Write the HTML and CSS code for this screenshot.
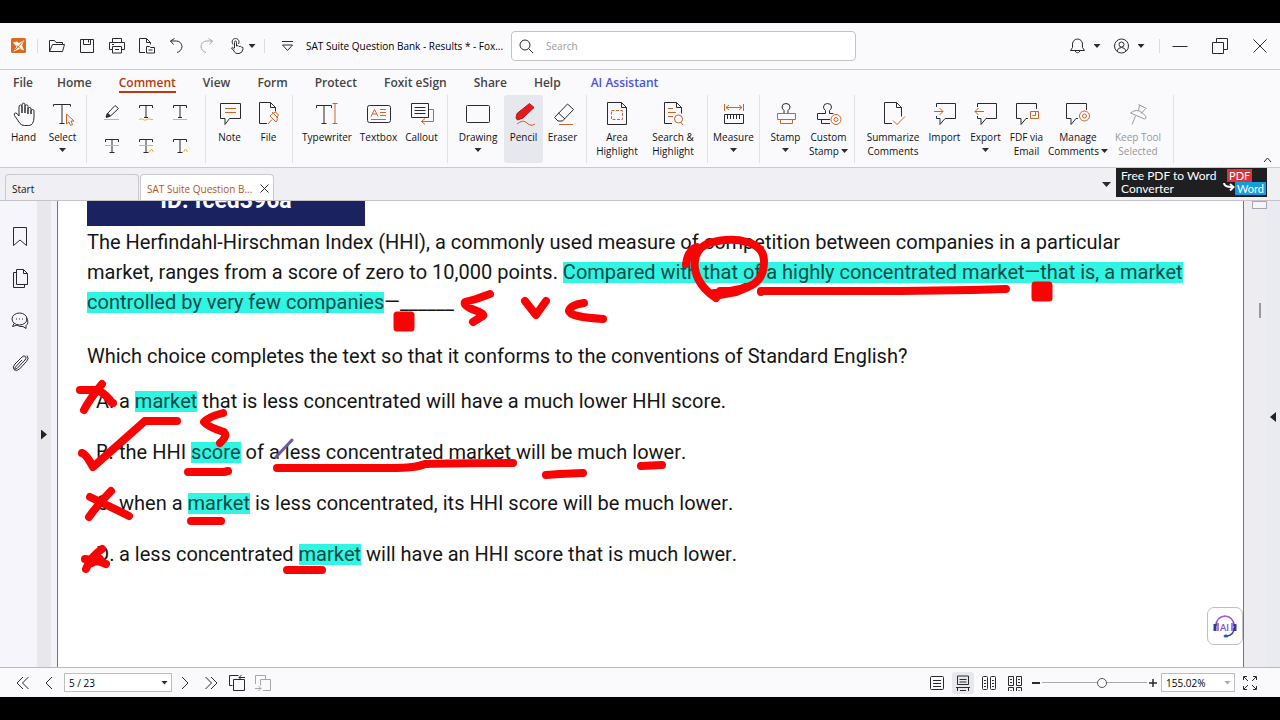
FILE: index.html
```html
<!DOCTYPE html>
<html lang="en">
<head>
<meta charset="utf-8">
<title>SAT Suite Question Bank - Results</title>
<link rel="stylesheet" href="styles.css">
</head>
<body>
<div class="app">
<header class="titlebar">
  <svg class="logo" width="16" height="16" viewBox="0 0 16 16"><rect x="0" y="0" width="15" height="15" rx="1.500" fill="#dc6a1e" stroke="none"/><path d="M2 4.500l4-1 2 1.500 5.500-3-2.500 5 2 5.500-4-1.500-6.500 2.500 3-5z" fill="#fff" stroke="none"/><path d="M4 12L12 3.500M5.500 7.500l4 3" stroke="#dc6a1e"/></svg>
  <span class="sep"></span>
  <button class="tb" aria-label="Open"><svg width="16" height="16" viewBox="0 0 16 16"><path d="M.5 13.500V2.500h5l1.500 2h6.500v2M.5 13.500l3-7h12l-2 7z"/></svg></button>
  <button class="tb" aria-label="Save"><svg width="16" height="16" viewBox="0 0 16 16"><path d="M1.500 1.500h13v13h-13zM4.500 1.500v5h7v-5M9.500 2v2.500"/></svg></button>
  <button class="tb" aria-label="Print"><svg width="16" height="16" viewBox="0 0 16 16"><path d="M3.500 4.500v-4h9v4M3.500 11.500h-3v-7h15v7h-3M3.500 8.500h9v6.500h-9zM3 6.500h2M6 11.500h4"/></svg></button>
  <button class="tb" aria-label="Export page"><svg width="16" height="16" viewBox="0 0 16 16"><path d="M6 14.500H.5V.5h7l4 4v2M7.500.5v4h4M7.500 8.500h3l1 1h4v5.500h-8zM9.500 12h4"/></svg></button>
  <button class="tb" aria-label="Undo"><svg width="16" height="16" viewBox="0 0 16 16"><path d="M5.500.5L1.500 3l3 3.500M1.500 3h6c3 0 5.500 2.500 5.500 5.500S10.500 14 8 14.500"/></svg></button>
  <button class="tb off" aria-label="Redo"><svg width="16" height="16" viewBox="0 0 16 16"><path d="M9.500.5l4 2.500-3 3.500M13.500 3h-6C4.500 3 2 5.500 2 8.500S4.500 14 7 14.500"/></svg></button>
  <button class="tb pair" aria-label="Touch mode"><svg width="16" height="16" viewBox="0 0 16 16"><path d="M5.500 10V4.500q0-1.500 1-1.500t1 1.500V8q2-1 2.500.5 2-.8 2.500.7 2-.2 1.500 1.800-.5 4-4 4.500c-3 .4-4-.5-5-2.500L2.500 10q.5-2 3 1M4 6.500C2 3 4 .5 6.500.5S11 3 9.500 6"/></svg><i class="caret"></i></button>
  <span class="sep"></span>
  <button class="tb more" aria-label="Customize toolbar"><svg width="14" height="16" viewBox="0 0 14 16"><path d="M1 3.500h11M1.500 7l5 5.500 5-5.500z"/></svg></button>
  <h1 class="doc-title">SAT Suite Question Bank - Results * - Fox...</h1>
  <label class="search"><svg width="16" height="16" viewBox="0 0 16 16"><circle cx="7" cy="7" r="5"/><path d="M10.500 10.500l4.500 4.500"/></svg><input type="search" placeholder="Search" aria-label="Search"></label>
  <div class="window">
    <button class="tb acct" aria-label="Notifications"><svg width="16" height="16" viewBox="0 0 16 16"><path d="M.5 12.500h14l-2-3V6C12.500 3 10 1 7.500 1S2.500 3 2.500 6v3.500zM5 13q2.500 3.500 5 0"/></svg><i class="caret"></i></button>
    <button class="tb acct" aria-label="Account"><svg width="16" height="16" viewBox="0 0 16 16"><circle cx="7.500" cy="8" r="7"/><circle cx="7.500" cy="6.500" r="2.500"/><path d="M3 13q1-3.500 4.500-3.500T12 13"/></svg><i class="caret"></i></button>
    <span class="sep"></span>
    <button class="tb win" aria-label="Minimize"><svg width="16" height="16" viewBox="0 0 16 16"><path d="M.5 8.500h15"/></svg></button>
    <button class="tb win" aria-label="Restore"><svg width="16" height="16" viewBox="0 0 16 16"><path d="M.5 4.500h11v11h-11zM4.500 4V.5h11v11h-3.500"/></svg></button>
    <button class="tb win" aria-label="Close"><svg width="16" height="16" viewBox="0 0 16 16"><path d="M1.500 1.500l13 13M14.500 1.500l-13 13"/></svg></button>
  </div>
</header>
<nav class="menu">
  <a href="#">File</a><a href="#">Home</a><a href="#" class="current">Comment</a><a href="#">View</a><a href="#">Form</a><a href="#">Protect</a><a href="#">Foxit eSign</a><a href="#">Share</a><a href="#">Help</a><a href="#" class="ai">AI Assistant</a>
</nav>
<div class="ribbon">
  <div class="group">
    <button class="tool s"><svg viewBox="0 0 26 26"><path d="M9 22.500L3.500 14.500q-1-2 .8-2.500t3.700 3V6q0-2 1.500-2T11 6v6V4q0-1.800 1.500-1.800T14 4v8-6.500q0-1.700 1.500-1.700T17 5.500V13 8q0-1.500 1.500-1.500T20 8v5-3q0-1.500 1.500-1.500T23 10v6q0 4-1.500 6.500-1 2-4 2h-4q-3 0-4.500-2z"/></svg><span>Hand</span></button>
    <button class="tool s"><svg viewBox="0 0 26 26"><path d="M3.500 5.500v-2h17v2M12 4v18.500M9.500 22.500h5"/><path class="o" d="M16.500 13v10l2.500-2 1.500 3.500 2-1-1.500-3.500h3z"/></svg><span>Select</span><i class="caret"></i></button>
  </div>
  <div class="group marks">
    <button aria-label="Highlight"><svg width="18" height="18" viewBox="0 0 18 18"><path d="M4.500 9.500L12 1.500l3.500 3-8 7.500M4.500 9l3 3-4 1.500z"/><path d="M3 13l1.500-3.500L7 12z" fill="#333"/><path class="y" d="M1 15.500h15"/></svg></button>
    <button aria-label="Squiggly underline"><svg width="18" height="18" viewBox="0 0 18 18"><path d="M2.500 4V1.500h13V4M9 2v11M7 13.500h4"/><path class="y" d="M2 15.500q2-1.500 4 0t4 0 4 0h2"/></svg></button>
    <button aria-label="Underline"><svg width="18" height="18" viewBox="0 0 18 18"><path d="M2.500 4V1.500h13V4M9 2v11M7 13.500h4"/><path class="y" d="M2 15.500h14"/></svg></button>
    <button aria-label="Strikeout"><svg width="18" height="18" viewBox="0 0 18 18"><path d="M2.500 5V2.500h13V5M9 3v12M6.500 15.500h5"/><path class="y" d="M2 8.500h14"/></svg></button>
    <button aria-label="Replace text"><svg width="18" height="18" viewBox="0 0 18 18"><path d="M2.500 5V2.500h13V5M9 3v12M6.500 15.500h5"/><path class="y" d="M2 8.500h14M12.500 15l2-3 2 3"/></svg></button>
    <button aria-label="Insert text"><svg width="18" height="18" viewBox="0 0 18 18"><path d="M2.500 5V2.500h13V5M9 3v12M6.500 15.500h5"/><path class="y" d="M12.500 15l2-3 2 3"/></svg></button>
  </div>
  <div class="group">
    <button class="tool s"><svg viewBox="0 0 26 26"><path d="M3.500 2.500h20v15h-11l-4.500 6v-6H3.500z"/><path class="o" d="M8 7.500h11M8 11.500h11"/></svg><span>Note</span></button>
    <button class="tool s"><svg viewBox="0 0 26 26"><path d="M11 22.500H3.500v-21h11l5 5v4M14.500 1.500v5h5"/><path class="o" d="M16 11l6 6M17 12.500l2.500-1.500 3 3-1.500 2.500q1 3-1 4.500l-6-6q2-2 3-2.500zM16 18.500l-4 4.500"/></svg><span>File</span></button>
  </div>
  <div class="group">
    <button class="tool xl"><svg viewBox="0 0 26 26"><path d="M2.500 7V4.500h15V7M10 5v17M7.500 22.500h5"/><path class="o" d="M18.500 2.500h5M18.500 22.500h5M21 3v19"/></svg><span>Typewriter</span></button>
    <button class="tool m"><svg viewBox="0 0 26 26"><rect x="1.500" y="4.500" width="23" height="17" rx="2"/><path class="o" d="M5 15.500l3.500-7 3.500 7M6.500 13h4M14 8.500h6M14 11.500h6M14 14.500h6M5 18.500h15"/></svg><span>Textbox</span></button>
    <button class="tool m"><svg viewBox="0 0 26 26"><path d="M2.500 2.500h17v14h-17zM5.500 6.500h11M5.500 9.500h11M5.500 12.500h11"/><path class="o" d="M20 8.500h4.500v12H13M16 17.500l-3.500 3 3.500 3"/></svg><span>Callout</span></button>
  </div>
  <div class="group">
    <button class="tool l"><svg viewBox="0 0 26 26"><rect x="1.500" y="4.500" width="23" height="17" rx="1"/></svg><span>Drawing</span><i class="caret"></i></button>
    <button class="tool s on" aria-pressed="true"><svg viewBox="0 0 26 26"><path class="lead" d="M5 17l1-4.500L18.500 2.500l4.500 4L12 17l-5.500 2z"/><path class="o" d="M6 23q6-5 10-1t8 1"/></svg><span>Pencil</span></button>
    <button class="tool s"><svg viewBox="0 0 26 26"><path d="M4.500 16.500L17.500 3l6 5.500-11 11.500H8zM8.500 12l6.500 6"/><path class="o" d="M9 23.500h14"/></svg><span>Eraser</span></button>
  </div>
  <div class="group">
    <button class="tool l"><svg viewBox="0 0 26 26"><path d="M3.500 1.500h14l5 5v17h-19zM17.500 1.500v5h5"/><path class="o" stroke-dasharray="3 1.500" d="M7.500 9.500h11v9h-11z"/></svg><span>Area<br>Highlight</span></button>
    <button class="tool xl"><svg viewBox="0 0 26 26"><path d="M12 22.500H4.500v-21h12l5 5v6M16.500 1.500v5h5"/><path class="o" d="M8 7.500h5M8 11.500h8M8 15.500h5M20.500 21l2.500 3"/><circle class="o" cx="18.500" cy="18" r="4"/></svg><span>Search &amp;<br>Highlight</span></button>
  </div>
  <div class="group">
    <button class="tool m"><svg viewBox="0 0 26 26"><path class="o" d="M3.500 3v7M22.500 3v7M5 6.500h16M8 4L5 6.500 8 9M18 4l3 2.500L18 9"/><path d="M3.500 13.500h19v9h-19zM6.500 14v4M9.500 14v4M12.500 14v4M15.500 14v4M18.500 14v4"/></svg><span>Measure</span><i class="caret"></i></button>
  </div>
  <div class="group">
    <button class="tool m"><svg viewBox="0 0 26 26"><path d="M11 12V9.500q-2-1.500-2-3.500 0-3.500 4-3.500T17 6q0 2-2 3.500V12"/><path class="o" d="M4.500 12.500h18v6h-18zM7.500 19v3.500h12V19"/></svg><span>Stamp</span><i class="caret"></i></button>
    <button class="tool m"><svg viewBox="0 0 26 26"><path d="M14 18.500H1.500v-6h8V9.500q-2-1.500-2-3.500 0-3.500 4-3.500T15.500 6q0 2-2 3.500v3h4M5.500 19v3.500H14"/><circle class="o" cx="20" cy="18.500" r="5"/><circle class="o" cx="20" cy="18.500" r="2"/></svg><span>Custom<br>Stamp<i class="caret"></i></span></button>
  </div>
  <div class="group last">
    <button class="tool xl"><svg viewBox="0 0 26 26"><path d="M12 22.500H4.500v-21h12l5 5v9M16.500 1.500v5h5"/><path class="o" d="M13 19.500l4 4 8-8"/></svg><span>Summarize<br>Comments</span></button>
    <button class="tool m"><svg viewBox="0 0 26 26"><path d="M4.500 6V2.500h19v15H13l-5 6v-6H4.500V15"/><path class="o" d="M2 10.500h9M7.500 7l3.500 3.500L7.500 14"/></svg><span>Import</span></button>
    <button class="tool s"><svg viewBox="0 0 26 26"><path d="M4.500 6V2.500h19v15H13l-5 6v-6H4.500V15"/><path class="o" d="M2 10.500h9M5.500 7L2 10.500 5.500 14"/></svg><span>Export</span><i class="caret"></i></button>
    <button class="tool m"><svg viewBox="0 0 26 26"><path d="M22.500 8V2.500h-20v15H7v6l5-6h2"/><path class="o" d="M16.500 10.500h8v7h-8zM21.500 11v3.500h-3"/></svg><span>FDF via<br>Email</span></button>
    <button class="tool xl"><svg viewBox="0 0 26 26"><path d="M21.500 9V2.500h-20v15H6v6l5-6h2"/><circle class="o" cx="19.500" cy="15" r="5"/><circle class="o" cx="19.500" cy="15" r="2"/></svg><span>Manage<br>Comments<i class="caret"></i></span></button>
    <button class="tool xl" disabled><svg viewBox="0 0 26 26"><path d="M13.500 3.500l8 4M14.500 4l-1 6M20.500 7.500l-4 5M5.500 12q6-5 12 0t2 6zM10.500 15L7 23.500"/></svg><span>Keep Tool<br>Selected</span></button>
  </div>
  <button class="collapse" aria-label="Collapse ribbon"><svg width="9" height="6" viewBox="0 0 9 6"><path d="M1 5l3.500-4L8 5"/></svg></button>
</div>
<div class="tabs">
  <button class="tab">Start</button>
  <div class="tab active"><span>SAT Suite Question B...</span><button aria-label="Close tab"><svg width="9" height="9" viewBox="0 0 9 9"><path d="M.5.5l8 8M8.500.5l-8 8"/></svg></button></div>
  <button class="tablist" aria-label="Tab list"><i class="caret"></i></button>
  <a class="promo" href="#"><span>Free PDF to Word<br>Converter</span><span class="chips"><b class="pdf">PDF</b><span class="to"><svg width="12" height="10" viewBox="0 0 12 10"><path d="M1 1q0 4 8 4M7 2l3.500 3L7 8.500"/></svg><b class="word">Word</b></span></span></a>
</div>
<main class="work">
  <aside class="rail">
    <button aria-label="Bookmarks"><svg width="18" height="20" viewBox="0 0 18 20"><path d="M2.500.5h13v18L9 13l-6.500 5.500z"/></svg></button>
    <button aria-label="Pages"><svg width="18" height="20" viewBox="0 0 18 20"><path d="M5.500.5h7l4 4v11h-11zM12.500.5v4h4M5 3.500H2.500v15h11V16"/></svg></button>
    <button aria-label="Comments"><svg width="18" height="20" viewBox="0 0 18 20"><ellipse cx="8.500" cy="8" rx="7.500" ry="6"/><path d="M3 12.500l-1.500 3 5-1.500M15.500 7q3 5-.5 7.500v3l-3-2q-4 .5-6-1.500M5 8h1M8 8h1M11 8h1"/></svg></button>
    <button aria-label="Attachments"><svg width="18" height="20" viewBox="0 0 18 20"><path d="M4 11l7-7q2-2 3.500-.5T14 7l-8 8.500q-1.500 1-2 .3T4.500 14L11 7M4 11q-3 3-1 5.500t5.500-.5l7-7.500q3-3 .5-6"/></svg></button>
  </aside>
  <button class="edge left" aria-label="Expand panel"></button>
  <article class="page">
    <h2 class="banner">ID: fced396a</h2>
    <p class="passage">The Herfindahl-Hirschman Index (HHI), a commonly used measure of competition between companies in a particular<br>market, ranges from a score of zero to 10,000 points. <mark>Compared with that of a highly concentrated market—that is, a market<br>controlled by very few companies</mark>—______</p>
    <p class="question">Which choice completes the text so that it conforms to the conventions of Standard English?</p>
    <ul class="choices">
      <li><span>A.</span><p>a <mark>market</mark> that is less concentrated will have a much lower HHI score.</p></li>
      <li><span>B.</span><p>the HHI <mark>score</mark> of a less concentrated market will be much lower.</p></li>
      <li><span>C.</span><p>when a <mark>market</mark> is less concentrated, its HHI score will be much lower.</p></li>
      <li><span>D.</span><p>a less concentrated <mark>market</mark> will have an HHI score that is much lower.</p></li>
    </ul>
    <svg class="ink" width="1185" height="466" viewBox="58 201 1185 466">
      <path d="M686 264q2-14 11-17M716 298q-18-12-21-29-3-19 14-26 22-6 38-1 17 5 17 19 0 19-14 25-9 4-36 7M714 296l22-4 12-5M720 291h17l8-4M716 298l-2-4M761 292v-1h100q80 0 145-2M490 294l-14 5-11 3q-2 4 12 9 10 4 4 6l-8 5M525 301l11 14 10-14M584 303q-14 2-15 8 1 6 34 8"/>
      <path d="M80 390h18q10 6 14 13h1M102 384q-13 16-18 26M82 453q4 1 11 14l52-46h32M145 421h31M223 413q-15 4-19 9 4 5 20 10 4 4-4 11M188 472h36l4-1M277 468h114q25 0 34-4 30-1 88-1M546 475l14-1 23-1M641 466l21-1M90 497q17 8 39 19M111 491q-12 12-22 26M191 521h30M85 559q12 1 21 5M102 549q-12 8-16 20M92 563l8-4M287 570h35"/>
      <rect x="395" y="313" width="18" height="17" rx="2"/><rect x="1033" y="283" width="18" height="17" rx="2"/>
      <path class="cursor" d="M276 457l16-17"/>
    </svg>
    <button class="assistant" aria-label="AI assistant"><svg width="26" height="26" viewBox="0 0 26 26"><defs><linearGradient id="g" x1="0" x2="0" y1="0" y2="1"><stop stop-color="#a95bdc"/><stop offset="1" stop-color="#2c3b8f"/></linearGradient></defs><path d="M4 13q0-9 9-10 9 1 9 10M22 15q0 7-7 8" stroke="url(#g)" stroke-width="1.500"/><path d="M3 11v7M23 11v7" stroke="#34389a" stroke-width="3"/><path d="M6 10v8M20 10v8" stroke="#a27be8" stroke-width="2"/><ellipse cx="14" cy="23" rx="2.500" ry="1.500" fill="#236292" stroke="none"/><text x="8" y="18">AI</text></svg></button>
  </article>
  <div class="scroll"><span class="thumb"></span><span class="notch"></span></div>
  <button class="edge right" aria-label="Expand right panel"></button>
</main>
<footer class="status">
  <button aria-label="First page"><svg width="14" height="16" viewBox="0 0 14 16"><path d="M7 2L1 8l6 6M12.500 2l-6 6 6 6"/></svg></button>
  <button aria-label="Previous page"><svg width="14" height="16" viewBox="0 0 14 16"><path d="M10 2L4 8l6 6"/></svg></button>
  <label class="drop pages"><select aria-label="Page"><option>5 / 23</option></select><i class="caret"></i></label>
  <button aria-label="Next page"><svg width="14" height="16" viewBox="0 0 14 16"><path d="M4 2l6 6-6 6"/></svg></button>
  <button aria-label="Last page"><svg width="14" height="16" viewBox="0 0 14 16"><path d="M1.500 2l6 6-6 6M7 2l6 6-6 6"/></svg></button>
  <button aria-label="Previous view"><svg width="16" height="16" viewBox="0 0 16 16"><path d="M3.500 10.500h-3V.5h9M4.500 4.500h11v11h-11zM10 2.500h6M12.500 0L10 2.500 12.500 5"/></svg></button>
  <button class="off" aria-label="Next view"><svg width="16" height="16" viewBox="0 0 16 16"><path d="M.5 9V.5h10v4M8 15.500h7.500v-11h-10v6M0 13.500h6M3.500 11L6 13.500 3.500 16"/></svg></button>
  <div class="views">
    <button aria-label="Single page"><svg width="16" height="16" viewBox="0 0 16 16"><rect x="1.500" y="1.500" width="13" height="13" rx="1"/><path d="M4 5.500h8M4 8.500h8M4 11.500h8"/></svg></button>
    <button class="on" aria-label="Continuous"><svg width="16" height="16" viewBox="0 0 16 16"><path d="M2.500 1v8.500h11V1zM4.500 4.500h7M4.500 7h7M1 12.500h14M2.500 16v-3M13.500 16v-3M5 15.500h6"/></svg></button>
    <button aria-label="Facing"><svg width="16" height="16" viewBox="0 0 16 16"><rect x="1.500" y="1.500" width="5" height="13" rx="1"/><rect x="9.500" y="1.500" width="5" height="13" rx="1"/><path d="M3 5.500h2M3 8.500h2M3 11.500h2M11 5.500h2M11 8.500h2M11 11.500h2"/></svg></button>
    <button aria-label="Continuous facing"><svg width="16" height="16" viewBox="0 0 16 16"><path d="M1.500 1.500h5v9h-5zM9.500 1.500h5v9h-5zM3 4.500h2M3 7.500h2M11 4.500h2M11 7.500h2M1.500 16v-3.500h5V16M9.500 16v-3.500h5V16M4 15v1M12 15v1"/></svg></button>
  </div>
  <button class="step" aria-label="Zoom out"><svg width="8" height="8" viewBox="0 0 8 8"><path d="M0 4h8" stroke-width="2"/></svg></button>
  <input class="zoom" type="range" min="0" max="100" value="58" aria-label="Zoom">
  <button class="step" aria-label="Zoom in"><svg width="8" height="8" viewBox="0 0 8 8"><path d="M0 4h8M4 0v8" stroke-width="1.500"/></svg></button>
  <label class="drop level"><select aria-label="Zoom level"><option>155.02%</option></select><i class="caret"></i></label>
  <button class="full" aria-label="Full screen"><svg width="16" height="16" viewBox="0 0 16 16"><path d="M1.500 5V1.500H5M11 1.500h3.500V5M14.500 11v3.500H11M5 14.500H1.500V11M2 2l4 4M14 2l-4 4M14 14l-4-4M2 14l4-4"/></svg></button>
</footer>
</div>
</body>
</html>
```
FILE: styles.css
```css
* { box-sizing: border-box; }
body { margin: 0; background: #000; font: 10px/14px "Open Sans", "Noto Sans", sans-serif; color: #111; }
button { border: 0; padding: 0; margin: 0; background: none; font: inherit; color: inherit; }
svg { fill: none; stroke: #2a2a2e; flex: none; }
h1, h2, p, ul { margin: 0; padding: 0; }
a { text-decoration: none; color: inherit; }
.app { display: flex; flex-direction: column; height: 100vh; padding: 23px 0; }
.app > * { background: #fafafd; flex: none; }
.caret { display: inline-block; width: 7px; height: 4px; background: #2b2b2b; clip-path: polygon(0 0, 100% 0, 50% 100%); }
.off { opacity: .4; }

.titlebar { display: flex; align-items: center; height: 47px; border-bottom: 1px solid #c9c9ce; }
.logo { margin-left: 11px; }
.titlebar .sep { width: 1px; height: 14px; background: #dcdce0; margin: 0 4px 0 10px; }
.tb { display: flex; align-items: center; justify-content: center; width: 30px; height: 30px; }
.pair { width: 40px; gap: 4px; }
.titlebar .pair + .sep { margin: 0 8px 0 2px; }
.doc-title { font-size: 10px; font-weight: 400; color: #000; white-space: nowrap; width: 205px; margin-left: 3px; }
.search { display: flex; align-items: center; gap: 10px; flex: 0 1 345px; height: 30px; padding: 0 6px; border: 1px solid #c3c3c7; border-radius: 4px; background: #fff; }
.search input { flex: 1; min-width: 0; border: 0; outline: 0; background: none; font: inherit; }
.search input::placeholder { color: #9b9b9b; opacity: 1; }
.window { display: flex; align-items: center; margin-left: auto; }
.acct { width: 44px; gap: 8px; }
.titlebar .window .sep { margin: 0 0 0 8px; }
.win { width: 40px; }

.menu { display: flex; gap: 27px; height: 25px; padding-left: 13px; font-size: 12px; line-height: 16px; font-weight: 600; color: #444; align-items: center; }
.menu a:first-child { margin-right: -3px; }
.menu .current { color: #b93a0c; box-shadow: 0 2px #b93a0c; }
.menu .ai { color: #4b53d8; margin-left: 3px; }

.ribbon { display: flex; height: 73px; border-bottom: 1px solid #c9c9ce; }
.group { display: flex; height: 68px; padding: 0 4px; border-right: 1px solid #e2e2e6; }
.tool { display: flex; flex-direction: column; align-items: center; height: 68px; padding-top: 6px; text-align: center; white-space: nowrap; }
.tool > svg { width: 26px; height: 26px; margin-bottom: 3px; }
.tool > .caret { margin-top: 4px; }
.tool span .caret { margin: 0 0 2px 2px; }
.s { width: 39px; }
.m { width: 43px; }
.l { width: 52px; }
.xl { width: 60px; }
.on { background: #e7e8ed; border-radius: 3px; }
.o { stroke: #c96528; }
.y { stroke: #e2b53c; }
.lead { fill: #e31b1b; stroke: #b81515; }
.tool:disabled { opacity: .45; color: #111; }
.marks { display: grid; grid-template-columns: repeat(3, 34px); padding: 1px 8px; }
.marks button { display: grid; place-items: center; }
.last { padding: 0 5px 0 8px; }
.collapse { margin: auto 8px 4px auto; line-height: 6px; }

.tabs { display: flex; align-items: flex-end; height: 33px; padding: 0 13px 0 5px; background: #efeff4; border-bottom: 1px solid #c3c3c8; gap: 1px; }
.tab { width: 134px; height: 26px; padding: 2px 6px 0; border: 1px solid #c9c9ce; border-bottom: 0; border-radius: 4px 4px 0 0; text-align: left; }
.active { display: flex; justify-content: space-between; align-items: center; background: #fff; color: #b4561b; white-space: nowrap; padding-right: 4px; }
.active button { line-height: 9px; }
.tablist { margin: 0 4px 10px auto; }
.tablist .caret { width: 9px; height: 5px; }
.promo { display: flex; justify-content: space-between; align-self: flex-start; width: 151px; height: 29px; padding: 1px 1px 1px 5px; background: #1f1f21; color: #fff; font: 12px/13px Lato, sans-serif; white-space: nowrap; }
.promo svg { stroke: #fff; stroke-width: 2; }
.chips { display: flex; flex-direction: column; align-items: flex-start; font-size: 11px; }
.chips b { font-weight: 400; padding: 0 2px; }
.to { display: flex; }
.pdf { background: #dc3434; margin-left: 4px; }
.word { background: #169de0; }

.app > .work { display: flex; flex: 1; min-height: 0; background: #f2f2f8; }
.rail { display: flex; flex-direction: column; gap: 22px; width: 37px; padding: 26px 0 0 11px; background: #f5f5fb; }
.rail button { height: 20px; width: 18px; line-height: 0; }
.edge { width: 14px; background: #e7e7ec; }
.edge::after { content: ""; display: block; width: 6px; height: 10px; margin: 1px auto 0 4px; background: #222; clip-path: polygon(0 0, 100% 50%, 0 100%); }
.left { margin-right: 6px; }
.right { background: #e9ebf1; width: 13px; }
.right::after { clip-path: polygon(100% 0, 0 50%, 100% 100%); margin: -34px 0 0 3px; }
.right { padding-top: 24px; }
.page { position: relative; flex: 1; min-width: 0; overflow: hidden; background: #fff; border: solid #74747a; border-width: 0 1px; padding-left: 29px; font: 20px/30px Roboto, sans-serif; font-kerning: none; color: #151515; }
.banner { width: 278px; height: 44px; margin-top: -19px; padding-top: 4px; background: #1a2360; color: #fff; font-size: 23px; line-height: 30px; text-align: center; }
mark { color: #0f4a4a; background: linear-gradient(transparent 2px, #2ff5e2 2px, #2ff5e2 23px, transparent 23px); }
.passage { padding-top: 1px; white-space: nowrap; }
.question { margin-top: 24px; white-space: nowrap; }
.choices { list-style: none; padding: 15px 0 0 9px; display: grid; gap: 21px; }
.choices li { display: grid; grid-template-columns: 23px 1fr; white-space: nowrap; }
.ink { position: absolute; left: 0; top: 0; stroke: #f80404; stroke-width: 8px; stroke-linecap: round; stroke-linejoin: round; }
.ink rect { fill: #f80404; stroke-width: 3px; }
.ink .cursor { stroke: #6f5aa0; stroke-width: 3px; }
.assistant { position: absolute; right: 0; bottom: 22px; width: 36px; height: 38px; border: 1px solid #bfbfc4; border-radius: 7px; background: #fff; display: grid; place-items: center; }
.assistant text { font: 700 9px Lato, sans-serif; fill: #7d5fd0; stroke: none; }
.scroll { display: flex; flex-direction: column; align-items: center; width: 23px; padding-left: 8px; background: #ededf1; }
.thumb { width: 15px; height: 8px; border: 1px solid #a5a5b4; background: #f4f4fa; }
.notch { width: 2px; height: 15px; margin-top: 94px; background: #999; }

.status { display: flex; align-items: center; height: 30px; border-top: 1px solid #b9b9be; padding: 0 22px 0 10px; }
.status button { display: grid; place-items: center; width: 26px; height: 22px; }
.drop { display: flex; align-items: center; height: 19px; border: 1px solid #bdbdc2; background: #fff; padding-right: 3px; }
.drop select { flex: 1; min-width: 0; appearance: none; border: 0; background: none; font: inherit; padding: 0 0 0 4px; color: #000; }
.pages { width: 108px; margin-left: 2px; }
.level { width: 74px; margin-left: 2px; }
.level .caret { opacity: .4; }
.views { display: flex; margin-left: auto; }
.status .views button { width: 22px; margin-right: 4px; }
.status .step { width: 12px; }
.zoom { appearance: none; width: 105px; height: 14px; margin: 0; background: linear-gradient(#aaa, #aaa) center / 100% 1px no-repeat; }
.zoom::-webkit-slider-thumb { appearance: none; width: 10px; height: 10px; border: 1px solid #555; border-radius: 50%; background: #fff; }
.status .full { width: 16px; margin-left: 7px; }
```
